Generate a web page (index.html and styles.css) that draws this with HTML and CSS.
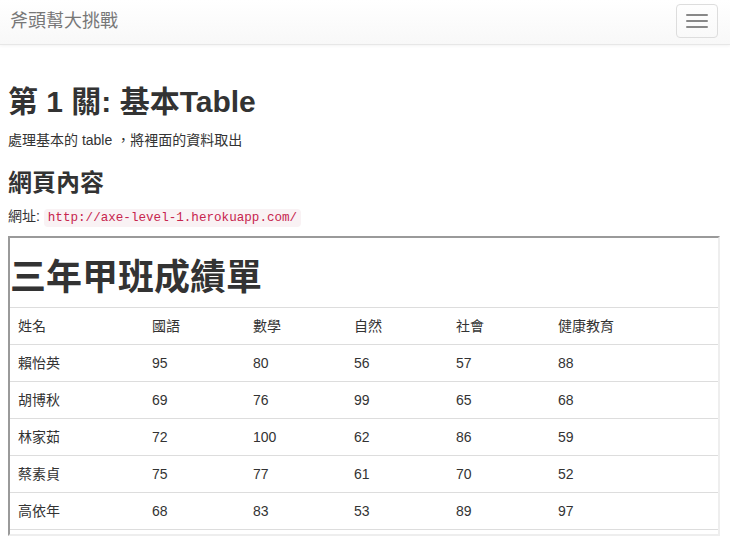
FILE: index.html
```html
<!DOCTYPE html>
<html lang="zh-Hant">
<head>
<meta charset="utf-8">
<title>斧頭幫大挑戰</title>
<link rel="stylesheet" href="styles.css">
</head>
<body>
<nav class="navbar">
  <a class="brand" href="#">斧頭幫大挑戰</a>
  <button class="toggle" type="button" aria-label="Toggle navigation">
    <span class="bar"></span><span class="bar"></span><span class="bar"></span>
  </button>
</nav>
<main class="main">
  <h2 class="title">第 1 關: 基本Table</h2>
  <p class="text">處理基本的 table ，將裡面的資料取出</p>
  <h3 class="subtitle">網頁內容</h3>
  <p class="text url">網址: <code class="code">http://axe-level-1.herokuapp.com/</code></p>
  <div class="frame">
    <h1 class="frame-title">三年甲班成績單</h1>
    <table class="table">
      <colgroup>
        <col class="c1"><col class="c2"><col class="c3"><col class="c4"><col class="c5"><col>
      </colgroup>
      <tbody>
        <tr><td>姓名</td><td>國語</td><td>數學</td><td>自然</td><td>社會</td><td>健康教育</td></tr>
        <tr><td>賴怡英</td><td>95</td><td>80</td><td>56</td><td>57</td><td>88</td></tr>
        <tr><td>胡博秋</td><td>69</td><td>76</td><td>99</td><td>65</td><td>68</td></tr>
        <tr><td>林家茹</td><td>72</td><td>100</td><td>62</td><td>86</td><td>59</td></tr>
        <tr><td>蔡素貞</td><td>75</td><td>77</td><td>61</td><td>70</td><td>52</td></tr>
        <tr><td>高依年</td><td>68</td><td>83</td><td>53</td><td>89</td><td>97</td></tr>
      </tbody>
    </table>
  </div>
</main>
</body>
</html>
```

FILE: styles.css
```css
html, body {
  margin: 0;
  padding: 0;
  background: #fff;
}
body {
  font-family: "Liberation Sans", "Noto Sans CJK TC", sans-serif;
  font-size: 14px;
  line-height: 20px;
  color: #333;
  overflow: hidden;
}
.navbar {
  height: 44px;
  display: flex;
  justify-content: space-between;
  align-items: flex-start;
  background: linear-gradient(to bottom, #ffffff 0%, #f8f8f8 100%);
  border-bottom: 1px solid #e7e7e7;
  box-shadow: 0 1px 3px rgba(0, 0, 0, 0.05);
}
.brand {
  font-size: 18px;
  line-height: 20px;
  color: #777;
  text-decoration: none;
  padding: 11px 0 0 10px;
}
.toggle {
  margin: 4px 12px 0 0;
  padding: 9px;
  width: 42px;
  height: 34px;
  box-sizing: border-box;
  background: transparent;
  border: 1px solid #ddd;
  border-radius: 4px;
  display: flex;
  flex-direction: column;
  gap: 4px;
}
.bar {
  display: block;
  width: 22px;
  height: 2px;
  border-radius: 1px;
  background: #888;
}
.main {
  padding: 40px 10px 0 8px;
}
.title {
  font-size: 30px;
  line-height: 33px;
  font-weight: 700;
  margin: 0 0 12px;
}
.text {
  margin: 0 0 10px;
  height: 20px;
}
.subtitle {
  font-size: 24px;
  line-height: 26px;
  font-weight: 700;
  margin: 20px 0 10px;
}
.code {
  font-family: "Liberation Mono", "DejaVu Sans Mono", monospace;
  font-size: 12.6px;
  line-height: 1;
  padding: 2px 4px;
  color: #c7254e;
  background: #f9f2f4;
  border-radius: 4px;
}
.frame {
  height: 296px;
  overflow: hidden;
  border-style: solid;
  border-width: 2px;
  border-color: #9a9a9a #eeeeee #eeeeee #9a9a9a;
}
.frame-title {
  font-size: 36px;
  line-height: 39px;
  font-weight: 700;
  margin: 20px 0 10px;
}
.table {
  width: 100%;
  table-layout: fixed;
  border-collapse: collapse;
  border-spacing: 0;
  border-bottom: 1px solid #ddd;
}
.table td {
  padding: 8px;
  line-height: 20px;
  border-top: 1px solid #ddd;
  text-align: left;
  vertical-align: top;
}
.c1 { width: 134px; }
.c2 { width: 101px; }
.c3 { width: 101px; }
.c4 { width: 102px; }
.c5 { width: 102px; }
```
